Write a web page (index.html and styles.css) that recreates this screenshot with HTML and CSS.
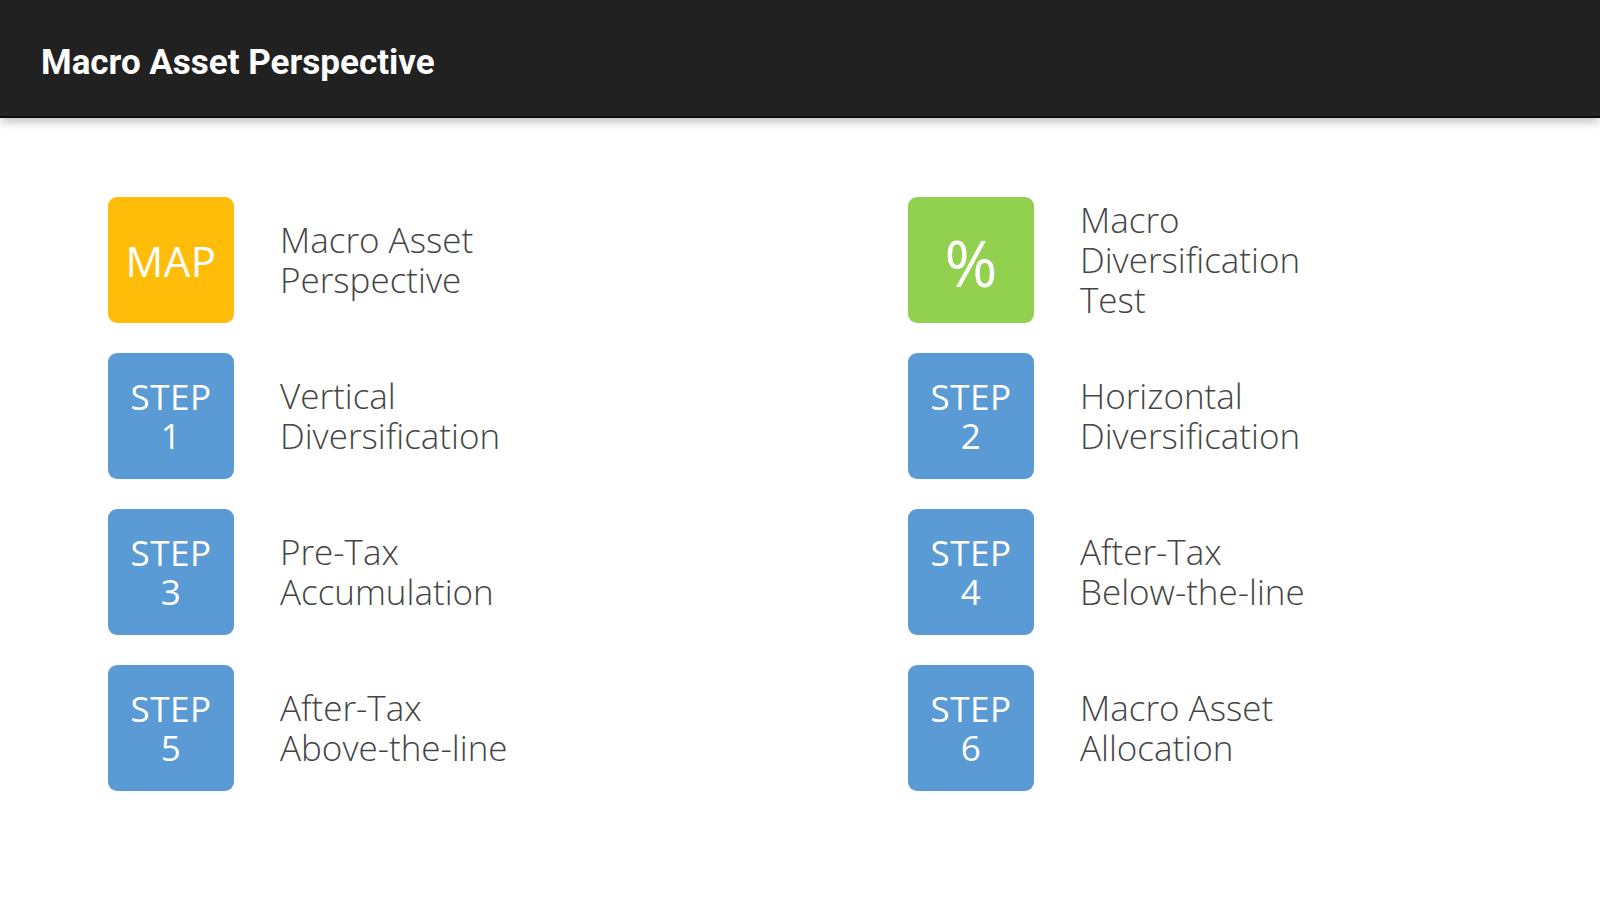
FILE: index.html
```html
<!DOCTYPE html>
<html lang="en">
<head>
<meta charset="utf-8">
<title>Macro Asset Perspective</title>
<link rel="stylesheet" href="styles.css">
</head>
<body>
<header class="appbar">
  <h1 class="appbar-title">Macro Asset Perspective</h1>
</header>
<main class="menu">
  <div class="item">
    <div class="tile tile-amber"><span class="tile-big">MAP</span></div>
    <div class="label">Macro Asset<br>Perspective</div>
  </div>
  <div class="item">
    <div class="tile tile-green"><span class="tile-pct">%</span></div>
    <div class="label">Macro<br>Diversification<br>Test</div>
  </div>
  <div class="item">
    <div class="tile tile-blue"><span class="tile-step">STEP<br>1</span></div>
    <div class="label">Vertical<br>Diversification</div>
  </div>
  <div class="item">
    <div class="tile tile-blue"><span class="tile-step">STEP<br>2</span></div>
    <div class="label">Horizontal<br>Diversification</div>
  </div>
  <div class="item">
    <div class="tile tile-blue"><span class="tile-step">STEP<br>3</span></div>
    <div class="label">Pre-Tax<br>Accumulation</div>
  </div>
  <div class="item">
    <div class="tile tile-blue"><span class="tile-step">STEP<br>4</span></div>
    <div class="label">After-Tax<br>Below-the-line</div>
  </div>
  <div class="item">
    <div class="tile tile-blue"><span class="tile-step">STEP<br>5</span></div>
    <div class="label">After-Tax<br>Above-the-line</div>
  </div>
  <div class="item">
    <div class="tile tile-blue"><span class="tile-step">STEP<br>6</span></div>
    <div class="label">Macro Asset<br>Allocation</div>
  </div>
</main>
</body>
</html>
```
FILE: styles.css
```css
* { box-sizing: border-box; }
html, body { margin: 0; padding: 0; background: #ffffff; }
body { width: 1600px; height: 900px; overflow: hidden; font-family: "Open Sans", "Noto Sans", sans-serif; }

.appbar {
  height: 118px;
  background: #212121;
  display: flex;
  align-items: center;
  padding-left: 41px;
  border-bottom: 2px solid #0c0c0c;
  box-shadow: 0 3px 10px rgba(0,0,0,0.28);
  position: relative;
  z-index: 1;
}
.appbar-title {
  margin: 0;
  margin-top: 8px;
  font-family: Roboto, "Liberation Sans", sans-serif;
  font-weight: 700;
  font-size: 35px;
  color: #ffffff;
}

.menu {
  display: grid;
  grid-template-columns: 800px 1fr;
  row-gap: 30px;
  padding: 79px 0 0 108px;
}
.item {
  display: flex;
  align-items: center;
  gap: 46px;
}
.tile {
  width: 126px;
  height: 126px;
  border-radius: 9px;
  display: flex;
  align-items: center;
  justify-content: center;
  color: #ffffff;
  flex: none;
  text-align: center;
  font-family: "Open Sans", "Noto Sans", sans-serif;
}
.tile-amber { background: #ffbd0a; }
.tile-green { background: #92d050; }
.tile-blue { background: #5b9bd5; }
.tile-big { font-size: 42px; font-weight: 400; letter-spacing: 0.5px; }
.tile-pct { font-size: 64px; font-weight: 400; margin-top: 4px; }
.tile-step { font-size: 35px; line-height: 39px; font-weight: 400; letter-spacing: 0.5px; }

.label {
  font-size: 35px;
  line-height: 40px;
  font-weight: 300;
  color: #444444;
}
```
